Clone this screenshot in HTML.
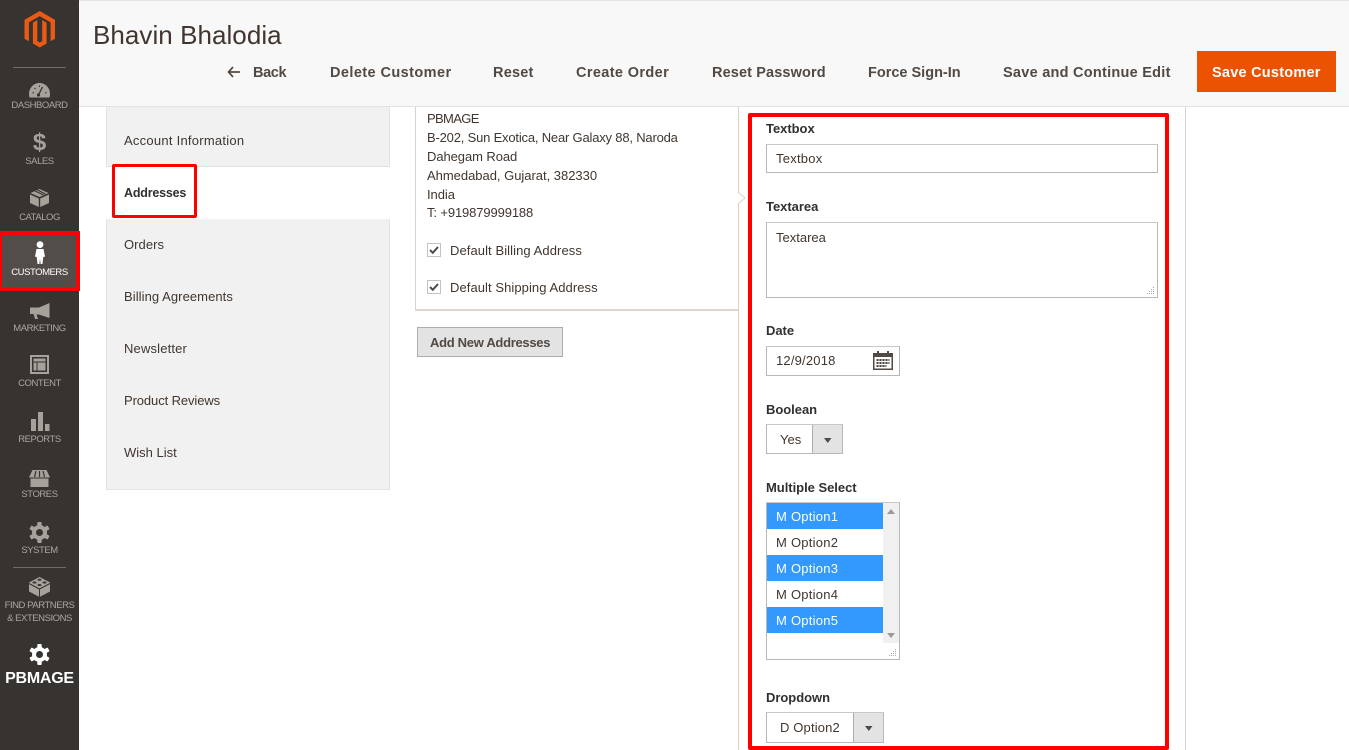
<!DOCTYPE html>
<html><head><meta charset="utf-8"><title>Bhavin Bhalodia</title>
<style>
html,body{margin:0;padding:0;width:1349px;height:750px;overflow:hidden;background:#fff}
body{position:relative;font-family:"Liberation Sans",sans-serif;color:#41362f}
.a{position:absolute}
.t{position:absolute;white-space:nowrap;line-height:18px;height:18px;font-size:13px;color:#41362f}
.n{position:absolute;left:0;width:79px;text-align:center;white-space:nowrap;font-size:9.5px;line-height:12px;color:#aaa6a0;letter-spacing:-.45px}
.h{position:absolute;white-space:nowrap;top:63px;line-height:20px;font-size:14.5px;font-weight:bold;color:#514943}
.b{font-weight:bold;color:#303030;letter-spacing:-.03px}
.g{position:absolute;left:106px;width:284px;background:#f1f1f1;border:1px solid #e3e3e3;border-top:0;box-sizing:border-box}
.box{position:absolute;background:#fff;border:1px solid #b8b8b8;border-top-color:#c8c8c8;box-sizing:border-box}
.rb{position:absolute;border:4px solid #f00;box-sizing:border-box;border-radius:2px}
svg{position:absolute;overflow:visible}
</style></head><body>

<div class="a" style="left:0;top:0;width:79px;height:750px;background:#373330"></div>

<svg style="left:24px;top:11px" width="32" height="37" viewBox="0 0 32 37"><path fill="#eb5a14" d="M15.700 0 31 8.900v18.800l-4.400 2.500V11.400L15.700 5.100 4.900 11.400v18.800L.5 27.700V8.900z"/><path fill="#eb5a14" d="M15.700 7.600 22.600 11.600v20.900L15.700 36.500 8.900 32.500V11.600l4.400-2.500v21l2.400 1.400 2.500-1.400v-21z"/></svg>
<div class="a" style="left:13px;top:67px;width:53px;height:1px;background:#6f6b68"></div>

<svg style="left:29px;top:83px" width="21" height="15" viewBox="0 0 21 15"><path fill="#a5a29c" d="M10.500 0C4.500 0 0 5 0 11c0 1.400.2 2.600.6 3.500h19.800c.4-.9.6-2.100.6-3.500C21 5 16.500 0 10.500 0z"/><path stroke="#373330" stroke-width="1.300" fill="none" d="M9.500 12 13.500 4"/><circle cx="9.500" cy="12" r="1.600" fill="#373330"/><path stroke="#373330" stroke-width="1" d="M3.500 9.500 5 10M5.500 5 6.500 6M10.500 2.500v1.500M17.500 9.500 16 10"/></svg>
<div class="n" style="top:100px">DASHBOARD</div>

<div class="a" style="left:0;width:79px;top:128px;text-align:center;font-size:24px;line-height:30px;font-weight:bold;color:#a5a29c">$</div>
<div class="n" style="top:156px">SALES</div>

<svg style="left:30px;top:189px" width="19" height="18" viewBox="0 0 19 18"><path fill="#a5a29c" d="M9.500 0 18.500 4 9.500 8 .5 4z"/><path fill="#a5a29c" d="M0 5.500 8.800 9.500V18L0 14z"/><path fill="#a5a29c" d="M19 5.500 10.200 9.500V18L19 14z"/><path stroke="#373330" stroke-width="1.200" d="M5 2 13.500 6M7.500 1 15.500 5"/></svg>
<div class="n" style="top:212px">CATALOG</div>

<div class="a" style="left:0;top:231px;width:80px;height:60px;background:#524d49;border:4px solid #f00;border-left-width:2px;box-sizing:border-box"></div>
<svg style="left:34px;top:241px" width="12" height="23" viewBox="0 0 12 23"><circle cx="6" cy="3.600" r="3.400" fill="#fff"/><path fill="#fff" d="M2.500 8h7L11 15.500l-1.800.8-.7 6.700H6.600L6 17.500 5.400 23H3.500l-.7-6.700L1 15.500z"/></svg>
<div class="n" style="top:267px;color:#fff">CUSTOMERS</div>

<svg style="left:30px;top:303px" width="20" height="16" viewBox="0 0 20 16"><path fill="#a5a29c" d="M19.500 0v15L9 11.500H6.500L8 16H5L3.500 11H0V4.500h9z"/></svg>
<div class="n" style="top:323px">MARKETING</div>

<svg style="left:30px;top:355px" width="19" height="19" viewBox="0 0 19 19"><path fill="#a5a29c" fill-rule="evenodd" d="M0 0h19v19H0zM2 2v15h15V2z"/><path fill="#a5a29c" d="M3.500 3.500h12v3h-12zM3.500 7.500h3v8h-3zM7.500 7.500h8v8h-8z"/></svg>
<div class="n" style="top:378px">CONTENT</div>

<svg style="left:31px;top:412px" width="18" height="19" viewBox="0 0 18 19"><path fill="#a5a29c" d="M0 7h5v12H0zM7 0h5v19H7zM14 12h4.500v7H14z"/></svg>
<div class="n" style="top:434px">REPORTS</div>

<svg style="left:29px;top:470px" width="21" height="17" viewBox="0 0 21 17"><path fill="#a5a29c" d="M3.500 0H17.500L21 7.500H0z"/><path fill="#a5a29c" d="M1.500 8.500H19.500V17H1.500z"/><path stroke="#373330" stroke-width="1.200" d="M7 1 5.500 7M10.500 1v6M14 1l1.500 6"/></svg>
<div class="n" style="top:489px">STORES</div>

<svg style="left:29px;top:522px" width="21" height="21" viewBox="0 0 21 21"><g fill="#a5a29c"><circle cx="10.500" cy="10.500" r="7.500"/><rect x="8.300" y="0" width="4.400" height="21" rx="1"/><rect x="8.300" y="0" width="4.400" height="21" rx="1" transform="rotate(60 10.500 10.500)"/><rect x="8.300" y="0" width="4.400" height="21" rx="1" transform="rotate(120 10.500 10.500)"/></g><circle cx="10.500" cy="10.500" r="3.500" fill="#373330"/></svg>
<div class="n" style="top:545px">SYSTEM</div>

<div class="a" style="left:13px;top:567px;width:53px;height:1px;background:#6f6b68"></div>

<svg style="left:29px;top:577px" width="21" height="20" viewBox="0 0 21 20"><path fill="#a5a29c" d="M10.500 0 21 5.500v9L10.500 20 0 14.500v-9z"/><path stroke="#373330" stroke-width="1" fill="none" d="M0 6.500 10.500 12 21 6.500M10.500 12v8"/><ellipse cx="10.500" cy="2.800" rx="2" ry="1" fill="#373330"/><ellipse cx="5.500" cy="5.500" rx="2" ry="1" fill="#373330"/><ellipse cx="15.500" cy="5.500" rx="2" ry="1" fill="#373330"/><ellipse cx="10.500" cy="8" rx="2" ry="1" fill="#373330"/></svg>
<div class="n" style="top:600px">FIND PARTNERS</div>
<div class="n" style="top:613px">&amp; EXTENSIONS</div>

<svg style="left:29px;top:644px" width="21" height="21" viewBox="0 0 21 21"><g fill="#fff"><circle cx="10.500" cy="10.500" r="7.500"/><rect x="8.300" y="0" width="4.400" height="21" rx="1"/><rect x="8.300" y="0" width="4.400" height="21" rx="1" transform="rotate(60 10.500 10.500)"/><rect x="8.300" y="0" width="4.400" height="21" rx="1" transform="rotate(120 10.500 10.500)"/></g><circle cx="10.500" cy="10.500" r="3.500" fill="#373330"/></svg>
<div class="a" style="left:0;top:669px;width:79px;text-align:center;font-size:16px;line-height:20px;font-weight:bold;color:#fff;letter-spacing:-.25px">PBMAGE</div>

<div class="a" style="left:79px;top:0;width:1270px;height:107px;background:#f8f8f8;border-top:1px solid #e3e3e3;border-bottom:1px solid #e3e3e3;box-sizing:border-box"></div>
<div class="a" style="left:93px;top:19px;font-size:26px;line-height:32px;color:#41362f;white-space:nowrap;letter-spacing:.05px">Bhavin Bhalodia</div>

<svg style="left:227px;top:66px" width="14" height="12" viewBox="0 0 14 12"><path d="M6 1 1.500 6 6 11M1.500 6H13" fill="none" stroke="#514943" stroke-width="1.700"/></svg>
<div class="h" style="left:253px;letter-spacing:-.38px">Back</div>
<div class="h" style="left:330px;letter-spacing:.42px">Delete Customer</div>
<div class="h" style="left:493px;letter-spacing:.22px">Reset</div>
<div class="h" style="left:576px;letter-spacing:.37px">Create Order</div>
<div class="h" style="left:712px;letter-spacing:.12px">Reset Password</div>
<div class="h" style="left:868px;letter-spacing:0">Force Sign-In</div>
<div class="h" style="left:1003px;letter-spacing:.26px">Save and Continue Edit</div>
<div class="a" style="left:1197px;top:51px;width:139px;height:41px;background:#eb5202"></div>
<div class="h" style="left:1212px;color:#fff;letter-spacing:.24px">Save Customer</div>

<div class="g" style="top:107px;height:60px"></div>
<div class="g" style="top:219px;height:271px"></div>
<div class="t" style="left:124px;top:132px;letter-spacing:.25px">Account Information</div>
<div class="t" style="left:124px;top:184px;font-size:12.5px;font-weight:bold;color:#303030;letter-spacing:-.2px">Addresses</div>
<div class="t" style="left:124px;top:236px;letter-spacing:.05px">Orders</div>
<div class="t" style="left:124px;top:288px;letter-spacing:.07px">Billing Agreements</div>
<div class="t" style="left:124px;top:340px;letter-spacing:.16px">Newsletter</div>
<div class="t" style="left:124px;top:392px;letter-spacing:-.1px">Product Reviews</div>
<div class="t" style="left:124px;top:444px;letter-spacing:0">Wish List</div>
<div class="rb" style="left:112px;top:164px;width:85px;height:54px;border-width:3px"></div>

<div class="a" style="left:415px;top:107px;width:1px;height:203px;background:#d9d3cd"></div>
<div class="a" style="left:415px;top:309px;width:324px;height:2px;background:#dcd7d0"></div>
<div class="a" style="left:738px;top:107px;width:1px;height:643px;background:#d9d3cd"></div>
<div class="a" style="left:1185px;top:107px;width:1px;height:643px;background:#d9d3cd"></div>
<svg style="left:738px;top:191px" width="8" height="14" viewBox="0 0 8 14"><path d="M0 1 7 7 0 13z" fill="#fff"/><path d="M0 1 7 7 0 13" fill="none" stroke="#d9d3cd"/></svg>

<div class="t" style="left:427px;top:110px;letter-spacing:-.65px">PBMAGE</div>
<div class="t" style="left:427px;top:129px;letter-spacing:-.19px">B-202, Sun Exotica, Near Galaxy 88, Naroda</div>
<div class="t" style="left:427px;top:148px;letter-spacing:-.07px">Dahegam Road</div>
<div class="t" style="left:427px;top:167px;letter-spacing:-.02px">Ahmedabad, Gujarat, 382330</div>
<div class="t" style="left:427px;top:186px;letter-spacing:-.05px">India</div>
<div class="t" style="left:427px;top:204px;letter-spacing:-.12px">T: +919879999188</div>

<div class="box" style="left:427px;top:243px;width:14px;height:14px;border-color:#c2c2c2"></div>
<svg style="left:429px;top:246px" width="10" height="8" viewBox="0 0 10 8"><path d="M1 4 3.800 6.800 9 1" fill="none" stroke="#514943" stroke-width="2"/></svg>
<div class="t" style="left:450px;top:242px;letter-spacing:.08px">Default Billing Address</div>
<div class="box" style="left:427px;top:280px;width:14px;height:14px;border-color:#c2c2c2"></div>
<svg style="left:429px;top:283px" width="10" height="8" viewBox="0 0 10 8"><path d="M1 4 3.800 6.800 9 1" fill="none" stroke="#514943" stroke-width="2"/></svg>
<div class="t" style="left:450px;top:279px;letter-spacing:.07px">Default Shipping Address</div>

<div class="a" style="left:417px;top:327px;width:146px;height:30px;background:#e3e3e3;border:1px solid #adadad;box-sizing:border-box"></div>
<div class="t" style="left:430px;top:334px;font-weight:bold;color:#514943;letter-spacing:-.3px">Add New Addresses</div>

<div class="rb" style="left:748px;top:113px;width:421px;height:637px"></div>

<div class="t b" style="left:766px;top:120px">Textbox</div>
<div class="box" style="left:766px;top:144px;width:392px;height:29px"></div>
<div class="t" style="left:776px;top:150px;letter-spacing:.24px">Textbox</div>

<div class="t b" style="left:766px;top:198px">Textarea</div>
<div class="box" style="left:766px;top:222px;width:392px;height:76px"></div>
<div class="t" style="left:776px;top:229px">Textarea</div>
<svg style="left:1146px;top:286px" width="10" height="10" viewBox="0 0 10 10"><path d="M7 1h1v1H7zM5 3h1v1H5zM7 3h1v1H7zM3 5h1v1H3zM5 5h1v1H5zM7 5h1v1H7zM1 7h1v1H1zM3 7h1v1H3zM5 7h1v1H5zM7 7h1v1H7z" fill="#a8a8a8"/></svg>

<div class="t b" style="left:766px;top:322px">Date</div>
<div class="box" style="left:766px;top:346px;width:134px;height:30px"></div>
<div class="t" style="left:776px;top:352px;letter-spacing:.19px">12/9/2018</div>
<svg style="left:873px;top:351px" width="20" height="19" viewBox="0 0 20 19"><path fill="#514943" d="M0 2h20v17H0z"/><path fill="#fff" d="M1.500 6h17v11.500h-17z"/><path fill="#514943" d="M4 0h2v4H4zM14 0h2v4h-2z"/><path fill="#514943" d="M3.500 8h13v2h-13zM3.500 11h13v2h-13zM3.500 14h10v2h-10z"/><path stroke="#fff" stroke-width=".8" d="M6 8v8M9 8v8M12 8v8M15 8v5"/></svg>

<div class="t b" style="left:766px;top:401px">Boolean</div>
<div class="box" style="left:766px;top:424px;width:77px;height:30px"></div>
<div class="a" style="left:812px;top:425px;width:30px;height:28px;background:#e3e3e3;border-left:1px solid #adadad;box-sizing:border-box"></div>
<div class="t" style="left:780px;top:431px">Yes</div>
<svg style="left:824px;top:438px" width="8" height="5" viewBox="0 0 8 5"><path d="M0 0h7.500L3.800 5z" fill="#514943"/></svg>

<div class="t b" style="left:766px;top:479px">Multiple Select</div>
<div class="box" style="left:766px;top:502px;width:134px;height:158px"></div>
<div class="a" style="left:767px;top:503px;width:116px;height:26px;background:#3399ff"></div>
<div class="a" style="left:767px;top:555px;width:116px;height:26px;background:#3399ff"></div>
<div class="a" style="left:767px;top:607px;width:116px;height:26px;background:#3399ff"></div>
<div class="a" style="left:883px;top:503px;width:16px;height:140px;background:#f0f0f0"></div>
<svg style="left:887px;top:509px" width="8" height="5" viewBox="0 0 8 5"><path d="M0 5h8L4 0z" fill="#9a9a9a"/></svg>
<svg style="left:887px;top:633px" width="8" height="5" viewBox="0 0 8 5"><path d="M0 0h8L4 5z" fill="#9a9a9a"/></svg>
<div class="t" style="left:776px;top:508px;color:#fff;letter-spacing:.25px">M Option1</div>
<div class="t" style="left:776px;top:534px;letter-spacing:.25px">M Option2</div>
<div class="t" style="left:776px;top:560px;color:#fff;letter-spacing:.25px">M Option3</div>
<div class="t" style="left:776px;top:586px;letter-spacing:.25px">M Option4</div>
<div class="t" style="left:776px;top:612px;color:#fff;letter-spacing:.25px">M Option5</div>
<svg style="left:888px;top:648px" width="10" height="10" viewBox="0 0 10 10"><path d="M7 1h1v1H7zM5 3h1v1H5zM7 3h1v1H7zM3 5h1v1H3zM5 5h1v1H5zM7 5h1v1H7zM1 7h1v1H1zM3 7h1v1H3zM5 7h1v1H5zM7 7h1v1H7z" fill="#a8a8a8"/></svg>

<div class="t b" style="left:766px;top:689px">Dropdown</div>
<div class="box" style="left:766px;top:712px;width:118px;height:31px"></div>
<div class="a" style="left:853px;top:713px;width:30px;height:29px;background:#e3e3e3;border-left:1px solid #adadad;box-sizing:border-box"></div>
<div class="t" style="left:780px;top:719px;letter-spacing:.15px">D Option2</div>
<svg style="left:865px;top:726px" width="8" height="5" viewBox="0 0 8 5"><path d="M0 0h7.500L3.800 5z" fill="#514943"/></svg>

</body></html>
